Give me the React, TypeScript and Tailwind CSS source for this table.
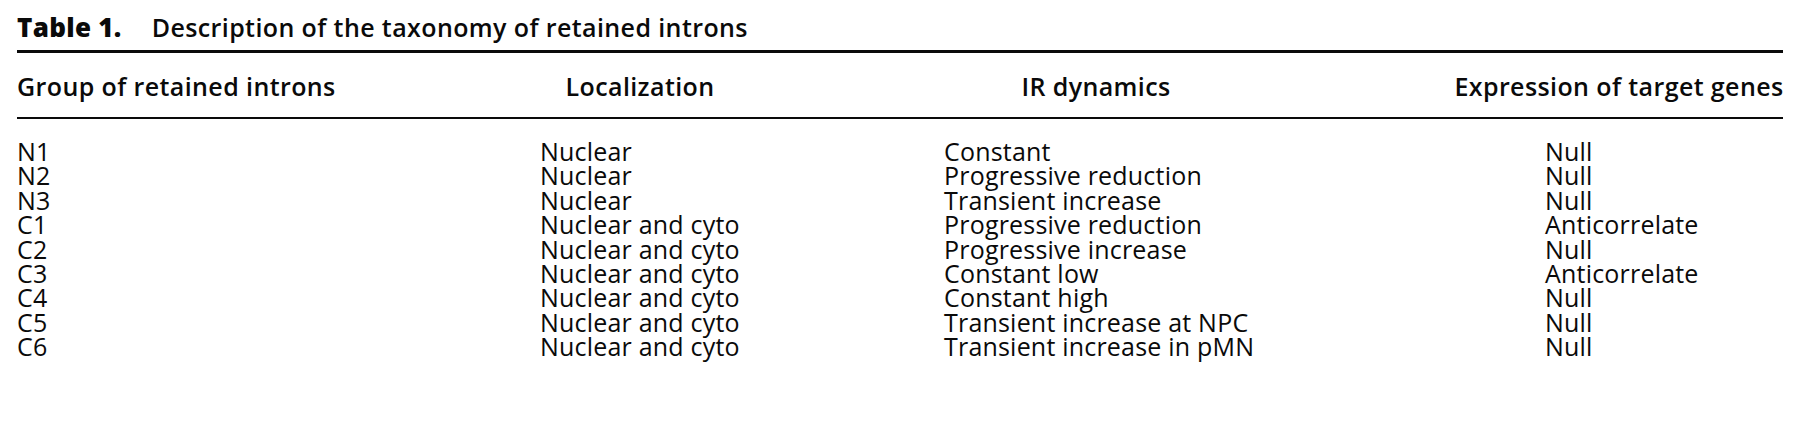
import React from "react";

const rows: [string, string, string, string][] = [
  ["N1", "Nuclear", "Constant", "Null"],
  ["N2", "Nuclear", "Progressive reduction", "Null"],
  ["N3", "Nuclear", "Transient increase", "Null"],
  ["C1", "Nuclear and cyto", "Progressive reduction", "Anticorrelate"],
  ["C2", "Nuclear and cyto", "Progressive increase", "Null"],
  ["C3", "Nuclear and cyto", "Constant low", "Anticorrelate"],
  ["C4", "Nuclear and cyto", "Constant high", "Null"],
  ["C5", "Nuclear and cyto", "Transient increase at NPC", "Null"],
  ["C6", "Nuclear and cyto", "Transient increase in pMN", "Null"],
];

export default function App() {
  return (
    <div
      className="w-[1800px] h-[427px] bg-white text-[#0a0a0a] px-[17px] overflow-hidden"
      style={{ fontFamily: '"Open Sans", "Noto Sans", sans-serif' }}
    >
      <div className="pt-[15px] h-[39px] flex items-start leading-[24px] whitespace-nowrap">
        <span className="font-extrabold text-[26px] tracking-[0.3px]">Table 1.</span>
        <span className="font-semibold text-[25px] tracking-[0.4px] ml-[30px]">
          Description of the taxonomy of retained introns
        </span>
      </div>
      <div className="mt-[11px] h-[3px] bg-[#0a0a0a]" />
      <div className="mt-[21px] flex text-[25px] leading-[24px] tracking-[0.4px] font-semibold whitespace-nowrap">
        <div className="w-[523px]">Group of retained introns</div>
        <div className="w-[404px]">
          <div className="w-[200px] flex justify-center">Localization</div>
        </div>
        <div className="w-[601px]">
          <div className="w-[304px] flex justify-center">IR dynamics</div>
        </div>
        <div className="flex-1">
          <div className="w-[148px] flex justify-center">Expression of target genes</div>
        </div>
      </div>
      <div className="mt-[19px] h-[2px] bg-[#0a0a0a]" />
      <div className="mt-[20px] flex flex-col text-[25px] leading-[24.4px] tracking-[0.2px] whitespace-nowrap">
        {rows.map((r) => (
          <div key={r[0]} className="flex h-[24.4px]">
            <div className="w-[523px]">{r[0]}</div>
            <div className="w-[404px]">{r[1]}</div>
            <div className="w-[601px]">{r[2]}</div>
            <div className="flex-1">{r[3]}</div>
          </div>
        ))}
      </div>
    </div>
  );
}
